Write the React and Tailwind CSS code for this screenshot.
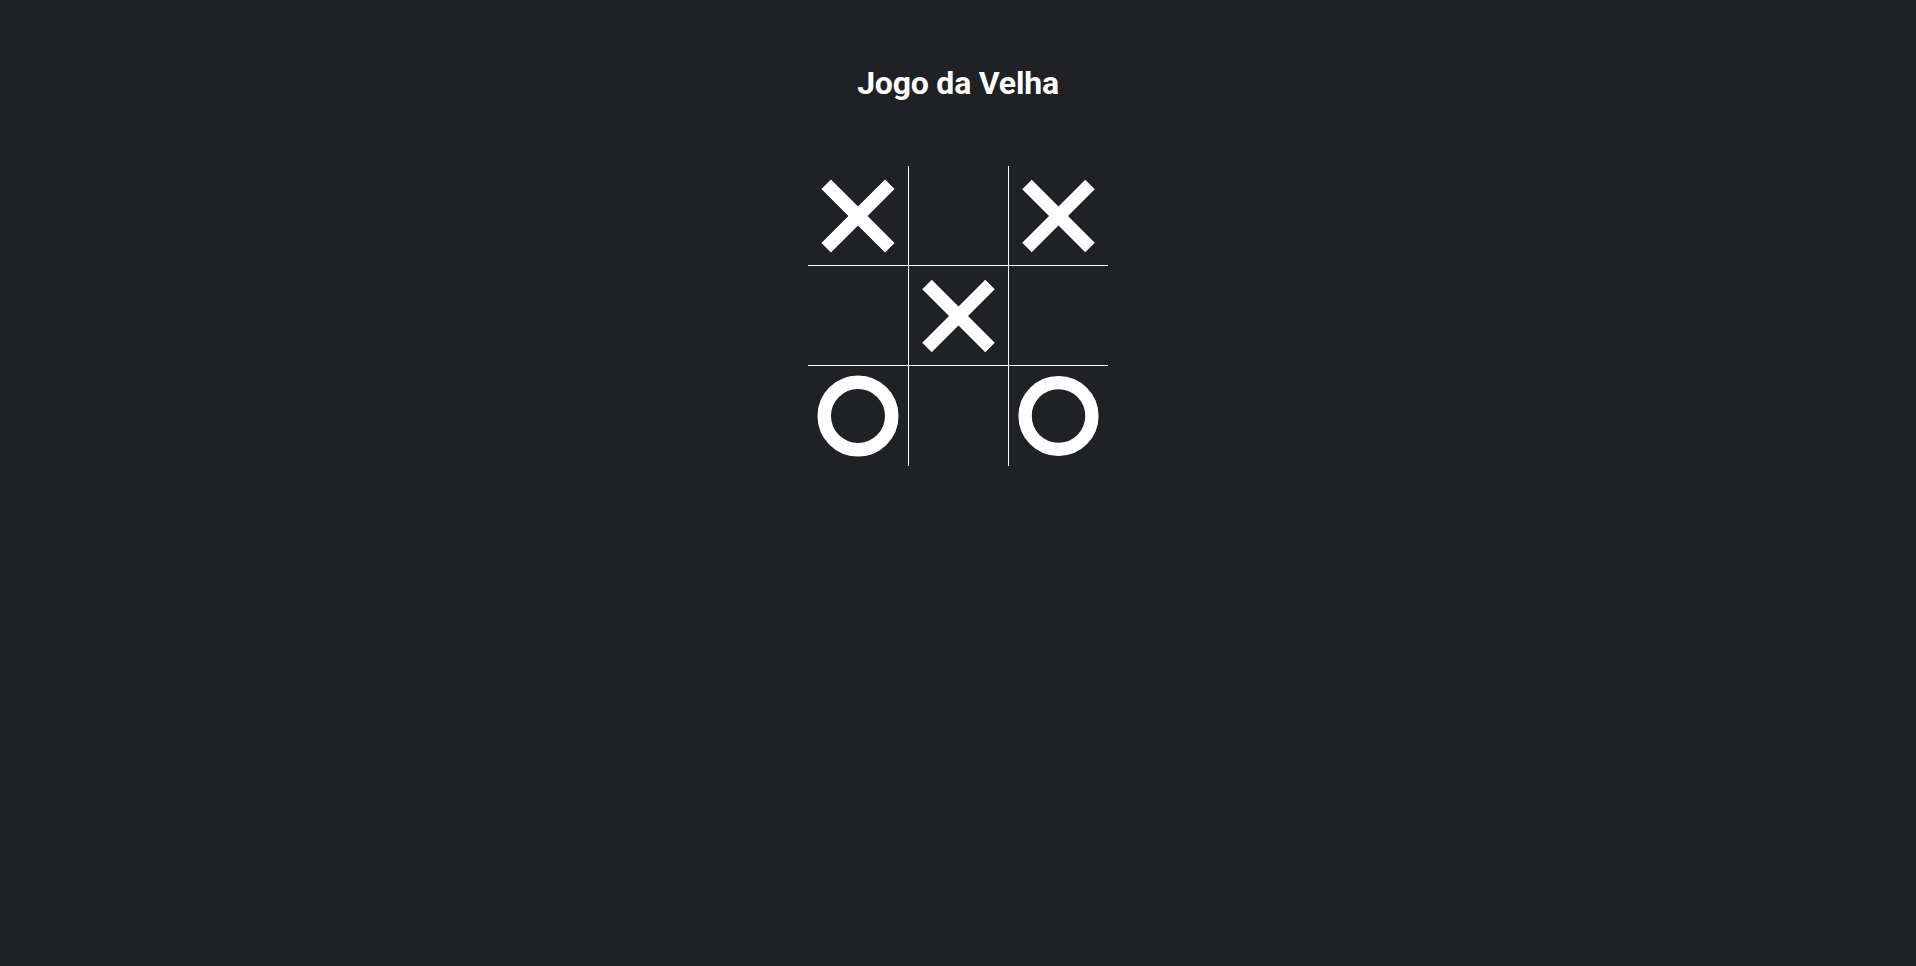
const board = ["x", "", "x", "", "x", "", "o", "", "o"];

function Mark({ type }) {
  if (type === "x") {
    return (
      <svg width="100" height="100" viewBox="0 0 100 100">
        <line x1="18.18" y1="18.18" x2="81.82" y2="81.82" stroke="#fff" strokeWidth="13.5" />
        <line x1="81.82" y1="18.18" x2="18.18" y2="81.82" stroke="#fff" strokeWidth="13.5" />
      </svg>
    );
  }
  if (type === "o") {
    return (
      <svg width="100" height="100" viewBox="0 0 100 100">
        <circle cx="50" cy="50" r="33.75" fill="none" stroke="#fff" strokeWidth="13.5" />
      </svg>
    );
  }
  return null;
}

export default function App() {
  return (
    <div className="min-h-screen bg-[#202124] flex flex-col items-center font-['Roboto',sans-serif] text-white">
      <h1 className="mt-[63px] text-[32px] leading-[40px] font-bold tracking-[-0.2px]">Jogo da Velha</h1>

      <div className="mt-[63px] grid grid-cols-3 w-[300px]">
        {board.map((cell, i) => (
          <div
            key={i}
            className={
              "w-[100px] h-[100px] flex items-center justify-center border-white overflow-visible " +
              (i % 3 !== 0 ? "border-l " : "") +
              (i < 6 ? "border-b" : "")
            }
          >
            <Mark type={cell} />
          </div>
        ))}
      </div>
    </div>
  );
}
